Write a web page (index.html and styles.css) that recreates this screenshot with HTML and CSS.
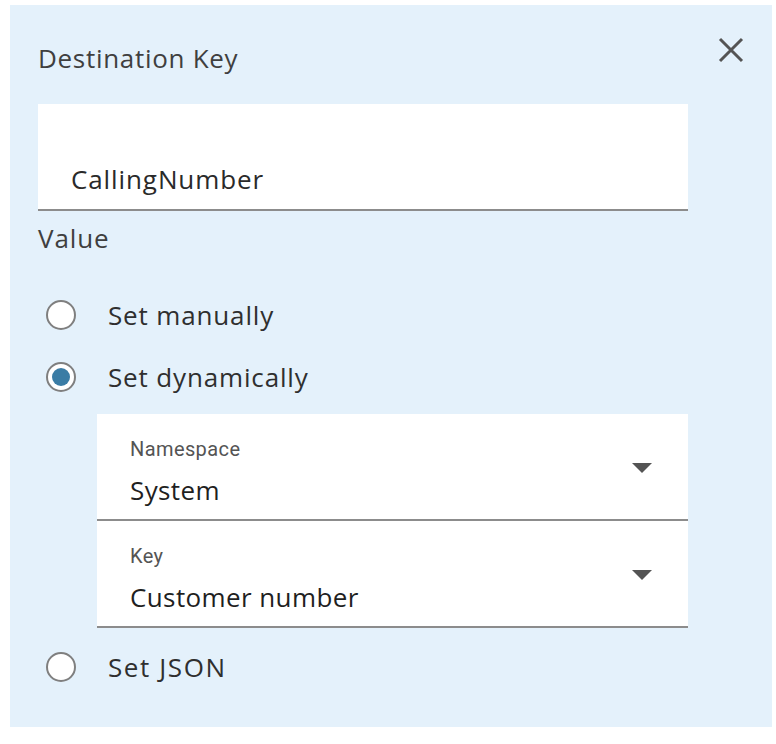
FILE: index.html
```html
<!DOCTYPE html>
<html>
<head>
<meta charset="utf-8">
<link rel="stylesheet" href="styles.css">
</head>
<body>
<div class="panel">
  <div class="header">
    <div class="title">Destination Key</div>
    <button class="close" aria-label="Close">
      <svg width="26" height="26" viewBox="0 0 26 26"><path d="M2 2 L24 24 M24 2 L2 24" stroke="#545454" stroke-width="3" fill="none"/></svg>
    </button>
  </div>
  <div class="input">CallingNumber</div>
  <div class="section-label">Value</div>
  <div class="radios">
    <div class="radio-row">
      <span class="radio"></span>
      <span class="radio-label">Set manually</span>
    </div>
    <div class="radio-row">
      <span class="radio checked"></span>
      <span class="radio-label">Set dynamically</span>
    </div>
    <div class="dropdowns">
      <div class="select">
        <div class="select-text">
          <div class="select-label">Namespace</div>
          <div class="select-value">System</div>
        </div>
        <span class="caret"></span>
      </div>
      <div class="select">
        <div class="select-text">
          <div class="select-label">Key</div>
          <div class="select-value">Customer number</div>
        </div>
        <span class="caret"></span>
      </div>
    </div>
    <div class="radio-row">
      <span class="radio"></span>
      <span class="radio-label wide">Set JSON</span>
    </div>
  </div>
</div>
</body>
</html>
```

FILE: styles.css
```css
html, body {
  margin: 0;
  padding: 0;
  background: #ffffff;
}
body {
  font-family: "Open Sans", "Noto Sans", sans-serif;
  color: #333333;
}
.panel {
  margin: 5px 4px 0 10px;
  width: 762px;
  height: 722px;
  box-sizing: border-box;
  background: #e4f1fb;
  padding: 38px 0 0 28px;
}
.header {
  display: flex;
  justify-content: space-between;
  align-items: flex-start;
  width: 706px;
}
.title {
  font-size: 26px;
  line-height: 30px;
  letter-spacing: 0.7px;
  color: #3f3f3f;
}
.close {
  border: 0;
  background: none;
  padding: 0;
  margin-top: -6px;
  width: 26px;
  height: 26px;
  cursor: pointer;
}
.close svg { display: block; }
.input {
  margin-top: 31px;
  height: 45px;
  width: 617px;
  padding: 60px 0 0 33px;
  background: #ffffff;
  border-bottom: 2px solid #8c8c8c;
  font-size: 26px;
  line-height: 30px;
  letter-spacing: 0.9px;
  color: #2a2a2a;
}
.section-label {
  margin-top: 12px;
  font-size: 26px;
  line-height: 30px;
  letter-spacing: 0.9px;
  color: #3f3f3f;
}
.radios {
  margin-top: 42px;
  display: flex;
  flex-direction: column;
}
.radio-row {
  display: flex;
  align-items: center;
  height: 40px;
}
.radio-row + .radio-row {
  margin-top: 22px;
}
.radio {
  width: 30px;
  height: 30px;
  box-sizing: border-box;
  border-radius: 50%;
  border: 2px solid #7f7f7f;
  background: #ffffff;
  margin-left: 8px;
  position: relative;
  flex: none;
}
.radio.checked::after {
  content: "";
  position: absolute;
  left: 4px;
  top: 4px;
  width: 18px;
  height: 18px;
  border-radius: 50%;
  background: #3a7ca5;
}
.radio-label {
  margin-left: 32px;
  font-size: 26px;
  line-height: 30px;
  letter-spacing: 0.85px;
  color: #2f2f2f;
}
.radio-label.wide {
  letter-spacing: 1.6px;
}
.dropdowns {
  margin: 17px 0 19px 59px;
  width: 591px;
  display: flex;
  flex-direction: column;
}
.select {
  background: #ffffff;
  border-bottom: 2px solid #8c8c8c;
  height: 105px;
  box-sizing: content-box;
  display: flex;
  align-items: center;
  justify-content: space-between;
  padding: 0 36px 0 33px;
}
.select-text {
  display: flex;
  flex-direction: column;
  padding-top: 10px;
}
.select-label {
  font-family: Roboto, "Noto Sans", sans-serif;
  font-size: 20px;
  line-height: 24px;
  letter-spacing: 0.4px;
  color: #545454;
}
.select-value {
  margin-top: 13px;
  font-size: 26px;
  line-height: 32px;
  letter-spacing: 0.4px;
  color: #1f1f1f;
}
.caret {
  width: 0;
  height: 0;
  border-left: 10px solid transparent;
  border-right: 10px solid transparent;
  border-top: 10px solid #545454;
  margin-top: 2px;
}
```
